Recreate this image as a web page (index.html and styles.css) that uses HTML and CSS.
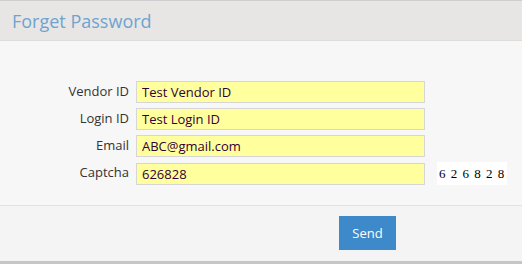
FILE: index.html
```html
<!DOCTYPE html>
<html lang="en">
<head>
    <meta charset="UTF-8">
    <meta name="viewport" content="width=device-width, initial-scale=1.0">
    <title>Forget Password</title>
    <link rel="stylesheet" href="styles.css">
</head>
<body>
    <div class="panel">
        <div class="panel-header">
            <h2>Forget Password</h2>
        </div>

        <div class="panel-body">
            <div class="form-row">
                <label for="vendor">Vendor ID</label>
                <input type="text" id="vendor" value="Test Vendor ID">
            </div>
            <div class="form-row">
                <label for="login">Login ID</label>
                <input type="text" id="login" value="Test Login ID">
            </div>
            <div class="form-row">
                <label for="email">Email</label>
                <input type="text" id="email" value="ABC@gmail.com">
            </div>
            <div class="form-row">
                <label for="captcha">Captcha</label>
                <input type="text" id="captcha" value="626828">
                <span class="captcha-code">6 2 6 8 2 8</span>
            </div>
        </div>

        <div class="panel-footer">
            <button>Send</button>
        </div>
    </div>
</body>
</html>
```

FILE: styles.css
```css
body {
    margin: 0;
    font-family: "Open Sans", Arial, sans-serif;
    color: #333;
}

.panel {
    width: 522px;
    height: 264px;
    border-top: 1px solid #cfcfcf;
    border-bottom: 3px solid #c6c6c6;
    box-sizing: border-box;
    display: flex;
    flex-direction: column;
}

.panel-header {
    height: 39px;
    background: #e8e6e4;
    border-bottom: 1px solid #dcdcdc;
    padding: 0 12px;
    display: flex;
    align-items: center;
}

.panel-header h2 {
    margin: 0;
    font-size: 18px;
    font-weight: normal;
    color: #6fa3d0;
}

.panel-body {
    background: #f7f7f7;
    padding: 40px 0 20px;
    border-bottom: 1px solid #e2e2e2;
    display: flex;
    flex-direction: column;
    gap: 5px;
}

.form-row {
    display: flex;
    align-items: center;
}

.form-row label {
    width: 129px;
    text-align: right;
    font-size: 13px;
    color: #333;
    margin-right: 7px;
    margin-top: -3px;
}

.form-row input {
    width: 289px;
    height: 22px;
    box-sizing: border-box;
    border: 1px solid #d6d6d6;
    background: #ffff9e;
    padding: 0 5px;
    font-family: "Open Sans", Arial, sans-serif;
    font-size: 13px;
    color: #330033;
}

.captcha-code {
    margin-left: 12px;
    width: 70px;
    height: 23px;
    box-sizing: border-box;
    padding-left: 2px;
    background: #fff;
    font-family: "Liberation Serif", "Times New Roman", serif;
    font-size: 13px;
    word-spacing: 2px;
    color: #000;
    line-height: 23px;
    white-space: nowrap;
}

.panel-footer {
    flex: 1;
    background: #f4f4f4;
    padding: 10px 0 0 339px;
}

button {
    width: 57px;
    height: 34px;
    background: #3d89c9;
    color: #fff;
    border: none;
    font-family: "Open Sans", Arial, sans-serif;
    font-size: 13px;
    cursor: pointer;
}

button:hover {
    background: #2f76b3;
}
```
